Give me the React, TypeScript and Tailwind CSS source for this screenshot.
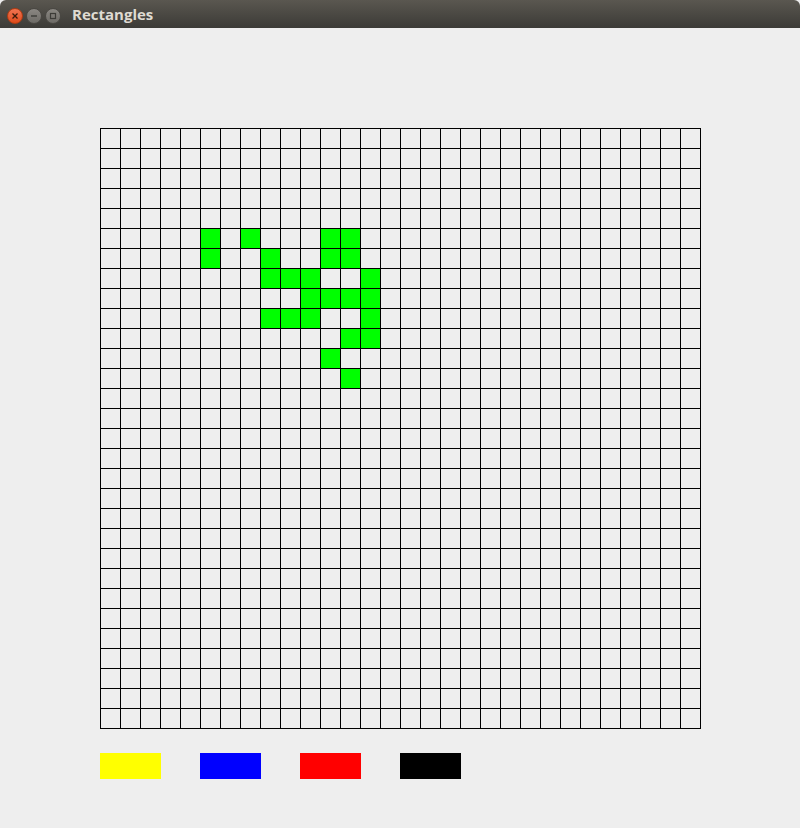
import React from "react";

const GREEN: Record<number, number[]> = {
  5: [5, 7, 11, 12],
  6: [5, 8, 11, 12],
  7: [8, 9, 10, 13],
  8: [10, 11, 12, 13],
  9: [8, 9, 10, 13],
  10: [12, 13],
  11: [11],
  12: [12],
};

export default function App() {
  const cells = [];
  for (let r = 0; r < 30; r++) {
    for (let c = 0; c < 30; c++) {
      const on = (GREEN[r] || []).includes(c);
      cells.push(
        <div key={r * 30 + c} className={on ? "bg-[#00ff00]" : "bg-[#eeeeee]"} />
      );
    }
  }
  return (
    <div className="w-[800px] h-[828px] bg-[#eeeeee] flex flex-col overflow-hidden">
      <div className="h-[28px] flex items-center shrink-0 bg-gradient-to-b from-[#5a5750] to-[#3c3b37] rounded-t-[6px]">
        <div className="flex items-center gap-[3px] pl-[7px] mt-[3px]">
          <div className="w-[16px] h-[16px] rounded-full bg-gradient-to-b from-[#f07350] to-[#df4a16] border border-[#b23c12] flex items-center justify-center">
            <svg width="8" height="8" viewBox="0 0 8 8">
              <path d="M1.5 1.5 L6.5 6.5 M6.5 1.5 L1.5 6.5" stroke="#3c1a0a" strokeWidth="1.3" />
            </svg>
          </div>
          <div className="w-[16px] h-[16px] rounded-full bg-gradient-to-b from-[#8a8782] to-[#6d6b66] border border-[#4a4843] flex items-center justify-center">
            <svg width="8" height="8" viewBox="0 0 8 8">
              <path d="M1 4 L7 4" stroke="#3c3b37" strokeWidth="1.4" />
            </svg>
          </div>
          <div className="w-[16px] h-[16px] rounded-full bg-gradient-to-b from-[#8a8782] to-[#6d6b66] border border-[#4a4843] flex items-center justify-center">
            <svg width="8" height="8" viewBox="0 0 8 8">
              <rect x="1.5" y="1.5" width="5" height="5" fill="none" stroke="#3c3b37" strokeWidth="1.2" />
            </svg>
          </div>
        </div>
        <span
          className="ml-[11px] mt-[1px] text-[15px] font-bold text-[#dfdbd2]"
          style={{ fontFamily: '"Open Sans", "DejaVu Sans", sans-serif' }}
        >
          Rectangles
        </span>
      </div>
      <div className="pl-[100px] pt-[100px]">
        <div className="w-[601px] h-[601px] bg-black p-px grid grid-cols-[repeat(30,19px)] grid-rows-[repeat(30,19px)] gap-px">
          {cells}
        </div>
        <div className="flex gap-[39px] mt-[24px]">
          <div className="w-[61px] h-[26px] bg-[#ffff00]" />
          <div className="w-[61px] h-[26px] bg-[#0000ff]" />
          <div className="w-[61px] h-[26px] bg-[#ff0000]" />
          <div className="w-[61px] h-[26px] bg-black" />
        </div>
      </div>
    </div>
  );
}
